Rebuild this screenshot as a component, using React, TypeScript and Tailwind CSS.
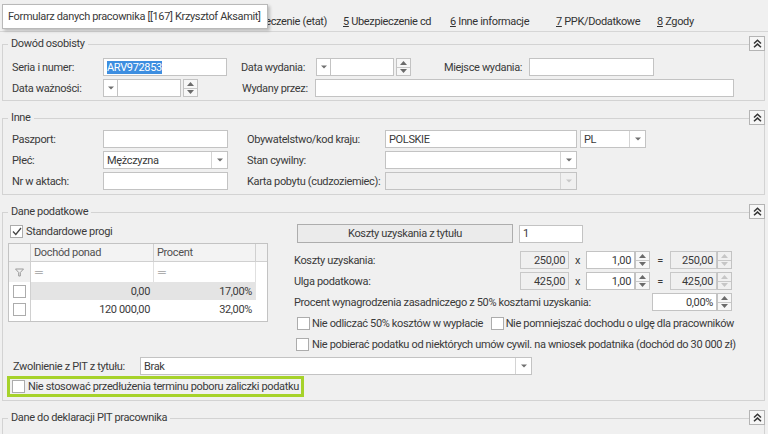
import React from 'react';

const Tri = ({ up = false, c = '#6b6b6b' }: { up?: boolean; c?: string }) => (
  <svg width="7" height="4" viewBox="0 0 7 4">
    <path d={up ? 'M0 4 L3.5 0 L7 4 Z' : 'M0 0 L7 0 L3.5 4 Z'} fill={c} />
  </svg>
);

const SmallTri = ({ c = '#707070' }: { c?: string }) => (
  <svg width="6" height="4" viewBox="0 0 6 4">
    <path d="M0 0.5 L6 0.5 L3 3.5 Z" fill={c} />
  </svg>
);

const Input = ({ className = '', children, right = false }: { className?: string; children?: React.ReactNode; right?: boolean }) => (
  <div className={`h-[18px] border border-[#c3c3c3] bg-white flex items-center px-[3px] whitespace-nowrap ${right ? 'justify-end' : ''} ${className}`}>
    {children}
  </div>
);

const ReadOnly = ({ className = '', children }: { className?: string; children?: React.ReactNode }) => (
  <div className={`h-[18px] border border-[#c8c8c8] bg-[#f0f0f0] flex items-center justify-end px-[3px] ${className}`}>{children}</div>
);

const Spin = ({ disabled = false, className = '' }: { disabled?: boolean; className?: string }) => (
  <div className={`w-[15px] h-[18px] border border-[#c3c3c3] flex flex-col ${disabled ? 'bg-[#f0f0f0]' : 'bg-[#f7f7f7]'} ${className}`}>
    <div className="flex-1 flex items-center justify-center border-b border-[#c8c8c8]">
      <Tri up c={disabled ? '#c6c6c6' : '#6b6b6b'} />
    </div>
    <div className="flex-1 flex items-center justify-center">
      <Tri c={disabled ? '#c6c6c6' : '#6b6b6b'} />
    </div>
  </div>
);

const Select = ({ className = '', children, disabled = false }: { className?: string; children?: React.ReactNode; disabled?: boolean }) => (
  <div className={`h-[18px] flex border border-[#c3c3c3] ${disabled ? 'bg-[#f0f0f0]' : 'bg-white'} ${className}`}>
    <div className="flex-1 flex items-center px-[3px] whitespace-nowrap">{children}</div>
    <div className="w-[16px] border-l border-[#d4d4d4] flex items-center justify-center">
      <SmallTri c={disabled ? '#c8c8c8' : '#707070'} />
    </div>
  </div>
);

const DateCtl = () => (
  <div className="flex h-[18px]">
    <div className="w-[15px] border border-[#c3c3c3] bg-white flex items-center justify-center">
      <SmallTri />
    </div>
    <div className="w-[63px] border-y border-r border-[#c3c3c3] bg-white" />
    <Spin className="ml-[2px]" />
  </div>
);

const Check = ({ checked = false }: { checked?: boolean }) => (
  <div className="w-[13px] h-[13px] border border-[#acacac] bg-white flex items-center justify-center shrink-0">
    {checked && (
      <svg width="10" height="9" viewBox="0 0 10 9">
        <path d="M1 4.5 L3.8 7.5 L9 1" fill="none" stroke="#444" strokeWidth="1.3" />
      </svg>
    )}
  </div>
);

const Collapse = () => (
  <div className="absolute right-0 top-0 w-[16px] h-[15px] border border-[#b4b4b4] bg-[#f6f6f6] flex items-center justify-center">
    <svg width="9" height="9" viewBox="0 0 9 9">
      <path d="M1 4.5 L4.5 1.3 L8 4.5 M1 8.3 L4.5 5.1 L8 8.3" fill="none" stroke="#333" strokeWidth="1.5" />
    </svg>
  </div>
);

const Section = ({ title, children, className = '' }: { title: string; children?: React.ReactNode; className?: string }) => (
  <div className={`relative ${className}`}>
    <fieldset className="border border-[#d3d3d3]">
      <legend className="ml-[5px] px-[3px] leading-[16px]">{title}</legend>
      {children}
    </fieldset>
    <Collapse />
  </div>
);

const Tab = ({ n, label, className = '' }: { n: string; label: string; className?: string }) => (
  <div className={`px-[8px] h-[22px] pt-[2px] flex items-center whitespace-nowrap text-[#333] shrink-0 ${className}`}>
    <span className="underline">{n}</span>
    <span>&nbsp;{label}</span>
  </div>
);

const Funnel = () => (
  <svg width="9" height="9" viewBox="0 0 9 9">
    <path d="M0.5 1 L8.5 1 L5.3 4.5 L5.3 8 L3.7 8 L3.7 4.5 Z" fill="none" stroke="#9a9a9a" strokeWidth="1" />
  </svg>
);

export default function App() {
  return (
    <div className="w-[768px] h-[434px] overflow-hidden bg-[#f0f0f0] relative font-['Roboto',sans-serif] text-[11px] tracking-[-0.35px] text-[#3a3a3a] leading-none">
      {/* tab strip */}
      <div className="h-[32px] border-b border-[#d6d6d6] flex items-end">
        <div className="w-[335px] shrink-0 flex justify-end overflow-hidden">
          <Tab n="4" label="Ubezpieczenie (etat)" />
        </div>
        <Tab n="5" label="Ubezpieczenie cd" className="w-[107px]" />
        <Tab n="6" label="Inne informacje" className="w-[106px]" />
        <Tab n="7" label="PPK/Dodatkowe" className="w-[101px]" />
        <Tab n="8" label="Zgody" />
      </div>

      {/* tooltip */}
      <div className="absolute left-[2px] top-[4px] w-[266px] h-[25px] bg-white border border-[#b9b9b9] shadow-[2px_2px_3px_rgba(0,0,0,0.22)] flex items-center px-[5px] whitespace-nowrap text-[#3a3a3a]">
        Formularz danych pracownika [[167] Krzysztof Aksamit]
      </div>

      <div className="pl-[2px] pr-[3px] whitespace-nowrap">
        {/* Dowód osobisty */}
        <Section title="Dowód osobisty" className="mt-[4px]">
          <div className="pl-[9px] pt-[6px] pb-[3px] flex flex-col gap-[3px]">
            <div className="flex items-center h-[18px]">
              <span className="w-[91px]">Seria i numer:</span>
              <Input className="w-[124px]">
                <span className="bg-[#3d8ee0] text-white leading-[13px]">ARV972853</span>
              </Input>
              <span className="ml-[14px] w-[75px]">Data wydania:</span>
              <DateCtl />
              <span className="ml-[33px] w-[85px]">Miejsce wydania:</span>
              <Input className="w-[125px]" />
            </div>
            <div className="flex items-center h-[18px]">
              <span className="w-[91px]">Data ważności:</span>
              <DateCtl />
              <span className="ml-[44px] w-[73px]">Wydany przez:</span>
              <Input className="w-[419px]" />
            </div>
          </div>
        </Section>

        {/* Inne */}
        <Section title="Inne" className="mt-[9px]">
          <div className="pl-[9px] pt-[4px] pb-[4px] flex">
            <div className="flex flex-col gap-[3px]">
              <div className="flex items-center h-[18px]">
                <span className="w-[91px]">Paszport:</span>
                <Input className="w-[125px]" />
              </div>
              <div className="flex items-center h-[18px]">
                <span className="w-[91px]">Płeć:</span>
                <Select className="w-[125px]">Mężczyzna</Select>
              </div>
              <div className="flex items-center h-[18px]">
                <span className="w-[91px]">Nr w aktach:</span>
                <Input className="w-[125px]" />
              </div>
            </div>
            <div className="ml-[19px] flex flex-col gap-[3px]">
              <div className="flex items-center h-[18px]">
                <span className="w-[138px]">Obywatelstwo/kod kraju:</span>
                <Input className="w-[192px]">POLSKIE</Input>
                <Select className="ml-[3px] w-[66px]">PL</Select>
              </div>
              <div className="flex items-center h-[18px]">
                <span className="w-[138px]">Stan cywilny:</span>
                <Select className="w-[192px]" />
              </div>
              <div className="flex items-center h-[18px]">
                <span className="w-[138px]">Karta pobytu (cudzoziemiec):</span>
                <Select className="w-[192px]" disabled />
              </div>
            </div>
          </div>
        </Section>

        {/* Dane podatkowe */}
        <Section title="Dane podatkowe" className="mt-[9px]">
          <div className="pl-[5px] pt-[3px] pb-[3px]">
            <div className="flex items-start">
              <div className="w-[260px]">
                <div className="h-[16px] flex items-center pl-[2px] gap-[3px]">
                  <Check checked />
                  <span>Standardowe progi</span>
                </div>
                <div className="mt-[4px] h-[79px] border border-[#c3c3c3] bg-white flex flex-col">
                  <div className="h-[18px] flex bg-[#f3f3f3] border-b border-[#d0d0d0] text-[#505050]">
                    <div className="w-[22px] border-r border-[#d0d0d0]" />
                    <div className="w-[123px] border-r border-[#d0d0d0] flex items-center pl-[3px]">Dochód ponad</div>
                    <div className="w-[102px] border-r border-[#d0d0d0] flex items-center pl-[3px]">Procent</div>
                    <div className="flex-1" />
                  </div>
                  <div className="h-[20px] flex">
                    <div className="w-[22px] border-r border-[#d0d0d0] bg-[#f0f0f0] flex items-center justify-center">
                      <Funnel />
                    </div>
                    <div className="w-[123px] border-r border-[#e0e0e0] flex items-center pl-[4px] text-[#a0a0a0]">═</div>
                    <div className="w-[102px] border-r border-[#e0e0e0] flex items-center pl-[4px] text-[#a0a0a0]">═</div>
                    <div className="flex-1" />
                  </div>
                  <div className="h-[18px] flex">
                    <div className="w-[22px] border-r border-[#d0d0d0] flex items-center justify-center">
                      <Check />
                    </div>
                    <div className="w-[225px] flex bg-[#e4e4e4]">
                      <div className="w-[123px] flex items-center justify-end pr-[4px]">0,00</div>
                      <div className="w-[102px] flex items-center justify-end pr-[4px]">17,00%</div>
                    </div>
                  </div>
                  <div className="h-[18px] flex">
                    <div className="w-[22px] border-r border-[#d0d0d0] flex items-center justify-center">
                      <Check />
                    </div>
                    <div className="w-[123px] flex items-center justify-end pr-[4px]">120 000,00</div>
                    <div className="w-[102px] flex items-center justify-end pr-[4px]">32,00%</div>
                  </div>
                  <div className="flex-1 flex">
                    <div className="w-[22px] border-r border-[#d0d0d0]" />
                  </div>
                </div>
              </div>

              <div className="ml-[26px] w-[440px] flex flex-col">
                <div className="mt-[1px] flex items-center">
                  <div className="ml-[3px] w-[216px] h-[19px] border border-[#adadad] bg-[#ebebeb] flex items-center justify-center">
                    Koszty uzyskania z tytułu
                  </div>
                  <Input className="ml-[6px] w-[64px]">1</Input>
                </div>
                <div className="mt-[8px] flex items-center h-[18px]">
                  <span className="w-[226px]">Koszty uzyskania:</span>
                  <ReadOnly className="w-[49px]">250,00</ReadOnly>
                  <span className="w-[17px] text-center">x</span>
                  <Input className="w-[49px]" right>1,00</Input>
                  <Spin />
                  <span className="w-[20px] text-center">=</span>
                  <ReadOnly className="w-[47px]">250,00</ReadOnly>
                  <Spin disabled />
                </div>
                <div className="mt-[3px] flex items-center h-[18px]">
                  <span className="w-[226px]">Ulga podatkowa:</span>
                  <ReadOnly className="w-[49px]">425,00</ReadOnly>
                  <span className="w-[17px] text-center">x</span>
                  <Input className="w-[49px]" right>1,00</Input>
                  <Spin />
                  <span className="w-[20px] text-center">=</span>
                  <ReadOnly className="w-[47px]">425,00</ReadOnly>
                  <Spin disabled />
                </div>
                <div className="mt-[3px] flex items-center h-[18px]">
                  <span className="w-[358px]">Procent wynagrodzenia zasadniczego z 50% kosztami uzyskania:</span>
                  <Input className="w-[65px]" right>0,00%</Input>
                  <Spin />
                </div>
                <div className="mt-[4px] flex items-center h-[17px]">
                  <div className="ml-[3px] w-[198px] flex items-center gap-[2px]">
                    <Check />
                    <span>Nie odliczać 50% kosztów w wypłacie</span>
                  </div>
                  <div className="flex items-center gap-[2px]">
                    <Check />
                    <span>Nie pomniejszać dochodu o ulgę dla pracowników</span>
                  </div>
                </div>
                <div className="mt-[4px] flex items-center h-[17px] ml-[2px] gap-[3px]">
                  <Check />
                  <span>Nie pobierać podatku od niektórych umów cywil. na wniosek podatnika (dochód do 30 000 zł)</span>
                </div>
              </div>
            </div>

            <div className="mt-[4px] flex items-center h-[18px] pl-[5px]">
              <span className="w-[127px]">Zwolnienie z PIT z tytułu:</span>
              <Select className="w-[392px]">Brak</Select>
            </div>

            <div className="mt-[1px] -ml-[1px] w-[297px] h-[21px] border-[3px] border-[#a6d22b] flex items-center pl-[2px] gap-[3px]">
              <Check />
              <span>Nie stosować przedłużenia terminu poboru zaliczki podatku</span>
            </div>
          </div>
        </Section>

        <Section title="Dane do deklaracji PIT pracownika" className="mt-[9px]">
          <div className="h-[40px]" />
        </Section>
      </div>
    </div>
  );
}
